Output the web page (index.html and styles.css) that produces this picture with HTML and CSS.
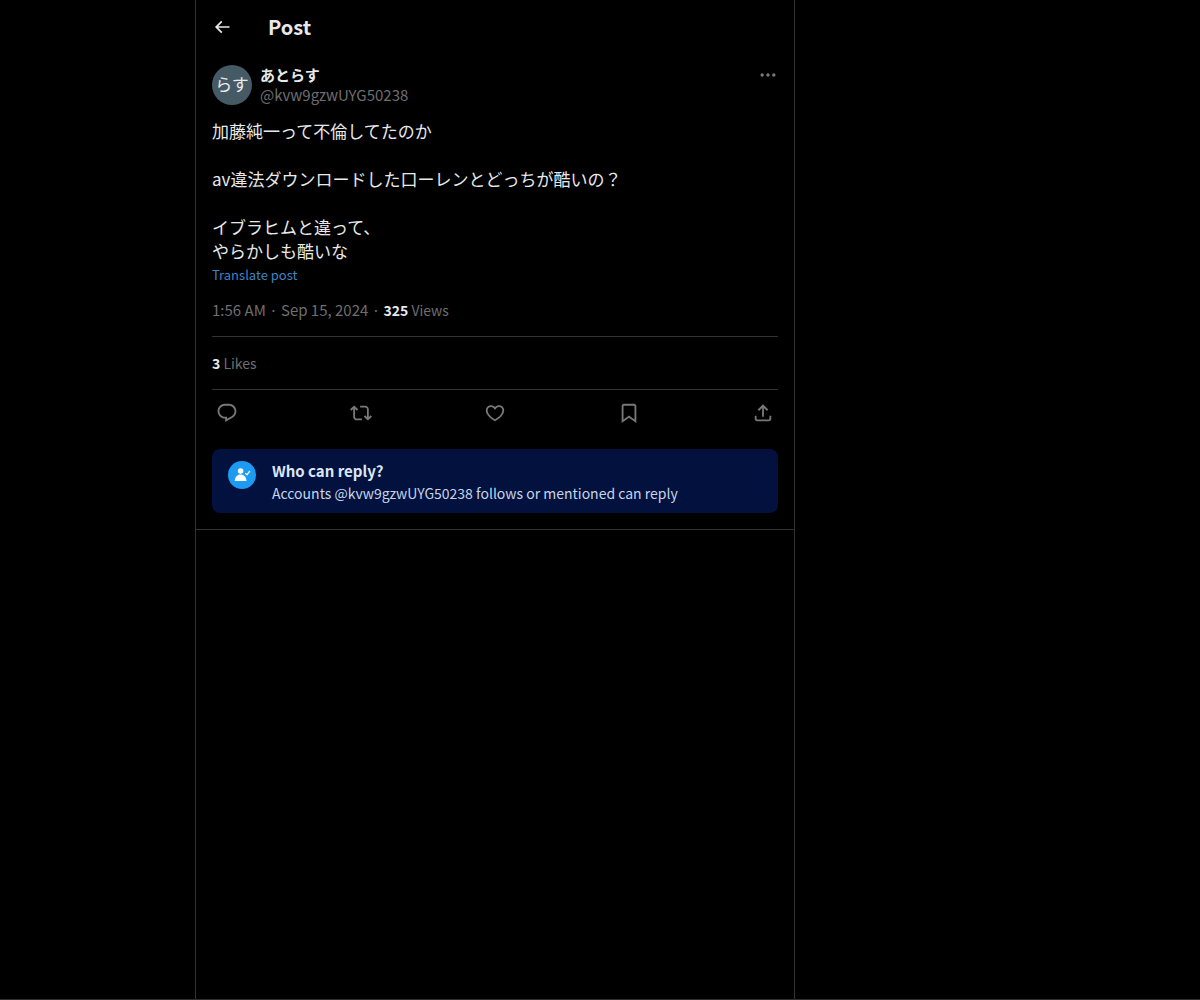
FILE: index.html
```html
<!DOCTYPE html>
<html lang="en">

<head>
    <meta charset="UTF-8">
    <meta name="viewport" content="width=device-width, initial-scale=1">
    <title>Post</title>
    <link rel="stylesheet" href="styles.css">
</head>

<body>
    <main class="column">
        <header class="topbar">
            <button class="icon-btn" type="button" aria-label="Back">
                <svg class="icon icon-back" viewBox="0 0 24 24"><path d="M7.414 13l5.043 5.04-1.414 1.42L3.586 12l7.457-7.46 1.414 1.42L7.414 11H21v2H7.414z"/></svg>
            </button>
            <h1 class="title">Post</h1>
        </header>

        <article class="post">
            <div class="author">
                <div class="avatar">らす</div>
                <div class="names">
                    <a class="name" href="#" lang="ja">あとらす</a>
                    <a class="handle" href="#">@kvw9gzwUYG50238</a>
                </div>
                <button class="icon-btn more" type="button" aria-label="More">
                    <svg class="icon icon-more" viewBox="0 0 24 24"><path d="M3 12c0-1.1.9-2 2-2s2 .9 2 2-.9 2-2 2-2-.9-2-2zm9 2c1.1 0 2-.9 2-2s-.9-2-2-2-2 .9-2 2 .9 2 2 2zm7 0c1.1 0 2-.9 2-2s-.9-2-2-2-2 .9-2 2 .9 2 2 2z"/></svg>
                </button>
            </div>

            <p class="text" lang="ja">加藤純一って不倫してたのか

av違法ダウンロードした口ーレンとどっちが酷いの？

イブラヒムと違って、
やらかしも酷いな</p>
            <a class="translate" href="#">Translate post</a>

            <p class="meta">1:56 AM · Sep 15, 2024 · <span class="count"><strong>325</strong> Views</span></p>
            <p class="likes"><span class="count"><strong>3</strong> Likes</span></p>

            <div class="actions">
                <button class="icon-btn" type="button" aria-label="Reply">
                    <svg class="icon" viewBox="0 0 24 24"><path d="M1.751 10c0-4.42 3.584-8 8.005-8h4.366c4.49 0 8.129 3.64 8.129 8.13 0 2.96-1.607 5.68-4.196 7.11l-8.054 4.46v-3.69h-.067c-4.49.1-8.183-3.51-8.183-8.01zm8.005-6c-3.317 0-6.005 2.69-6.005 6 0 3.37 2.77 6.08 6.138 6.01l.351-.01h1.761v2.3l5.087-2.81c1.951-1.08 3.163-3.13 3.163-5.36 0-3.39-2.744-6.13-6.129-6.13H9.756z"/></svg>
                </button>
                <button class="icon-btn" type="button" aria-label="Repost">
                    <svg class="icon" viewBox="0 0 24 24"><path d="M4.5 3.88l4.432 4.14-1.364 1.46L5.5 7.55V16c0 1.1.896 2 2 2H13v2H7.5c-2.209 0-4-1.79-4-4V7.55L1.432 9.48.068 8.02 4.5 3.88zM16.5 6H11V4h5.5c2.209 0 4 1.79 4 4v8.45l2.068-1.93 1.364 1.46-4.432 4.14-4.432-4.14 1.364-1.46 2.068 1.93V8c0-1.1-.896-2-2-2z"/></svg>
                </button>
                <button class="icon-btn" type="button" aria-label="Like">
                    <svg class="icon" viewBox="0 0 24 24"><path d="M16.697 5.5c-1.222-.06-2.679.51-3.89 2.16l-.805 1.09-.806-1.09C9.984 6.01 8.526 5.44 7.304 5.5c-1.243.07-2.349.78-2.91 1.91-.552 1.12-.633 2.78.479 4.82 1.074 1.97 3.257 4.27 7.129 6.61 3.87-2.34 6.052-4.64 7.126-6.61 1.111-2.04 1.03-3.7.477-4.82-.561-1.13-1.666-1.84-2.908-1.91zm4.187 7.69c-1.351 2.48-4.001 5.12-8.379 7.67l-.503.3-.504-.3c-4.379-2.55-7.029-5.19-8.382-7.67-1.36-2.5-1.41-4.86-.514-6.67.887-1.79 2.647-2.91 4.601-3.01 1.651-.09 3.368.56 4.798 2.01 1.429-1.45 3.146-2.1 4.796-2.01 1.954.1 3.714 1.22 4.601 3.01.896 1.81.846 4.17-.514 6.67z"/></svg>
                </button>
                <button class="icon-btn" type="button" aria-label="Bookmark">
                    <svg class="icon" viewBox="0 0 24 24"><path d="M4 4.5C4 3.12 5.119 2 6.5 2h11C18.881 2 20 3.12 20 4.5v18.44l-8-5.71-8 5.71V4.5zM6.5 4c-.276 0-.5.22-.5.5v14.56l6-4.29 6 4.29V4.5c0-.28-.224-.5-.5-.5h-11z"/></svg>
                </button>
                <button class="icon-btn" type="button" aria-label="Share">
                    <svg class="icon" viewBox="0 0 24 24"><path d="M12 2.59l5.7 5.7-1.41 1.42L13 6.41V16h-2V6.41l-3.3 3.3-1.41-1.42L12 2.59zM21 15l-.02 3.51c0 1.38-1.12 2.49-2.5 2.49H5.5C4.11 21 3 19.88 3 18.5V15h2v3.5c0 .28.22.5.5.5h12.98c.28 0 .5-.22.5-.5L19 15h2z"/></svg>
                </button>
            </div>

            <section class="notice">
                <svg class="notice-icon" viewBox="0 0 28 28">
                    <circle cx="14" cy="14" r="14" fill="#1d9bf0"/>
                    <circle cx="12.6" cy="10" r="2.8" fill="#fff"/>
                    <path d="M6.700 20c.3-4.200 2.500-6.500 5.900-6.500s5.600 2.300 5.900 6.500z" fill="#fff"/>
                    <path d="M17.300 12.300l1.600 1.500 3-3.800" fill="none" stroke="#fff" stroke-width="1.300"/>
                </svg>
                <div>
                    <h2 class="notice-title">Who can reply?</h2>
                    <p class="notice-text">Accounts @kvw9gzwUYG50238 follows or mentioned can reply</p>
                </div>
            </section>
        </article>
    </main>
</body>

</html>
```

FILE: styles.css
```css
* {
    padding: 0;
    margin: 0;
    box-sizing: border-box;
}

body {
    display: grid;
    grid-template-columns: 195px minmax(0, 600px) 1fr;
    min-height: 100vh;
    background: #000;
    color: #e7e9ea;
    font-family: "Noto Sans CJK JP", sans-serif;
    font-size: 15px;
    line-height: 20px;
    border-bottom: 1px solid #2f2f2f;
}

a {
    text-decoration: none;
}

.column {
    grid-column: 2;
    border-left: 1px solid #333;
    border-right: 1px solid #333;
}

.topbar {
    display: flex;
    align-items: center;
    gap: 32px;
    height: 53px;
    padding: 0 12px;
}

.title {
    font-size: 20px;
    line-height: 24px;
}

.icon-btn {
    display: flex;
    padding: 4px;
    background: none;
    border: 0;
    color: #787878;
    cursor: pointer;
}

.icon {
    width: 22px;
    height: 22px;
    fill: currentColor;
}

.icon-back {
    width: 20px;
    height: 20px;
    color: #e7e9ea;
}

.icon-more {
    width: 20px;
    height: 20px;
}

.post {
    padding: 12px 16px 16px;
    border-bottom: 1px solid #333;
}

.author {
    display: flex;
    align-items: flex-start;
    gap: 8px;
}

.avatar {
    width: 40px;
    height: 40px;
    border-radius: 50%;
    background: #455a64;
    font-size: 17px;
    line-height: 38px;
    text-align: center;
}

.names {
    display: flex;
    flex-direction: column;
    flex: 1;
}

.name {
    color: #e7e9ea;
    font-weight: bold;
}

.handle,
.meta,
.likes {
    color: #6e6e6e;
}

.more {
    margin: -4px -4px 0 0;
}

.text {
    margin-top: 14px;
    font-size: 17px;
    line-height: 24px;
    white-space: pre-wrap;
}

.translate {
    display: block;
    color: #3d84c6;
    font-size: 13px;
    line-height: 24px;
}

.meta {
    padding: 13px 0 16px;
    border-bottom: 1px solid #333;
}

.likes {
    padding: 16px 0;
    border-bottom: 1px solid #333;
}

.count {
    font-size: 14px;
}

strong {
    color: #e7e9ea;
}

.actions {
    display: flex;
    justify-content: space-between;
    padding: 8px 0 21px;
}

.notice {
    display: flex;
    gap: 16px;
    padding: 12px 16px 8px;
    border-radius: 8px;
    background: #02113d;
}

.notice-icon {
    flex: none;
    width: 28px;
    height: 28px;
}

.notice-title {
    color: #dbe6f4;
    font-size: 15px;
    line-height: 20px;
}

.notice-text {
    color: #c5d5ea;
    font-size: 14px;
    line-height: 24px;
}
```
